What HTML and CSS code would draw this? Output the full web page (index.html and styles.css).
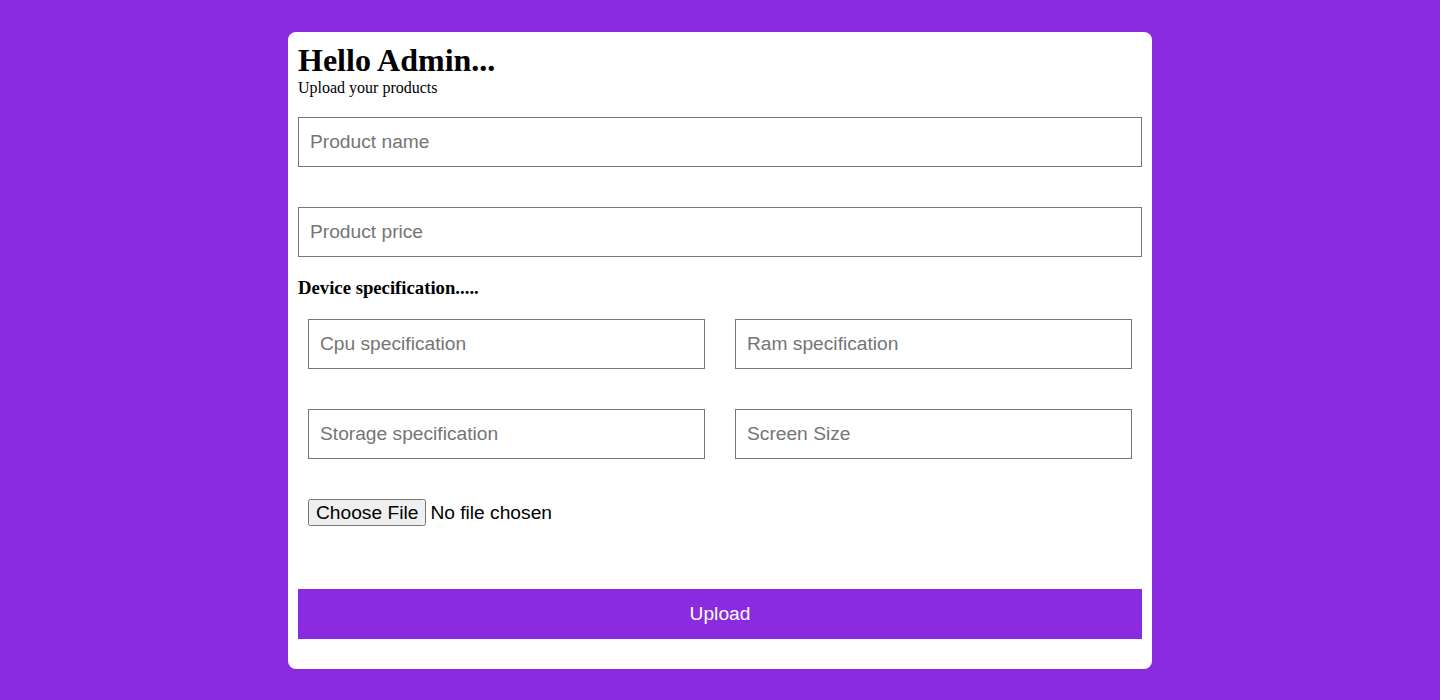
FILE: index.html
```html
<!DOCTYPE html>
<html>
<head>
<meta charset="utf-8">
<title>Upload products</title>
<link rel="stylesheet" href="styles.css">
</head>
<body>
<div class="card">
  <h1 class="title">Hello Admin...</h1>
  <p class="subtitle">Upload your products</p>
  <form class="form">
    <input class="field field-first" type="text" placeholder="Product name">
    <input class="field field-second" type="text" placeholder="Product price">
    <h3 class="section">Device specification.....</h3>
    <div class="spec-grid">
      <input class="field" type="text" placeholder="Cpu specification">
      <input class="field" type="text" placeholder="Ram specification">
      <input class="field" type="text" placeholder="Storage specification">
      <input class="field" type="text" placeholder="Screen Size">
    </div>
    <div class="file-row">
      <input class="file" type="file">
    </div>
    <button class="submit" type="button">Upload</button>
  </form>
</div>
</body>
</html>
```

FILE: styles.css
```css
html, body {
  margin: 0;
  padding: 0;
}
body {
  background: #8a2be2;
  font-family: "Liberation Serif", "Times New Roman", serif;
  min-height: 700px;
  padding-top: 32px;
  box-sizing: border-box;
}
.card {
  width: 864px;
  margin: 0 auto;
  background: #ffffff;
  border-radius: 8px;
  padding: 10px 10px 30px;
  box-sizing: border-box;
}
.title {
  margin: 0;
  font-size: 32px;
  font-weight: bold;
  line-height: 37px;
  color: #000;
}
.subtitle {
  margin: 0;
  font-size: 16px;
  line-height: 18px;
  color: #000;
}
.form {
  display: flex;
  flex-direction: column;
}
.field {
  display: block;
  width: 100%;
  height: 50px;
  box-sizing: border-box;
  border: 1px solid #767676;
  border-radius: 0;
  padding: 0 11px;
  font-family: "Liberation Sans", Arial, sans-serif;
  font-size: 19.2px;
  color: #000;
  background: #fff;
  outline: none;
}
.field::placeholder {
  color: #757575;
}
.field-first {
  margin-top: 20px;
}
.field-second {
  margin-top: 40px;
}
.section {
  margin: 20px 0 0;
  font-size: 18.72px;
  line-height: 21px;
  font-weight: bold;
  color: #000;
}
.spec-grid {
  display: grid;
  grid-template-columns: 1fr 1fr;
  column-gap: 30px;
  row-gap: 40px;
  margin: 21px 10px 0;
}
.file-row {
  margin: 40px 10px 0;
  height: 27px;
  display: flex;
  align-items: center;
}
.file {
  font-family: "Liberation Sans", Arial, sans-serif;
  font-size: 19.2px;
  color: #000;
}
.file::file-selector-button {
  height: 27px;
  padding: 0 6px;
  margin-right: 4px;
}
.submit {
  margin-top: 63px;
  height: 50px;
  width: 100%;
  border: none;
  background: #8a2be2;
  color: #fff;
  font-family: "Liberation Sans", Arial, sans-serif;
  font-size: 19.2px;
  cursor: pointer;
}
```
